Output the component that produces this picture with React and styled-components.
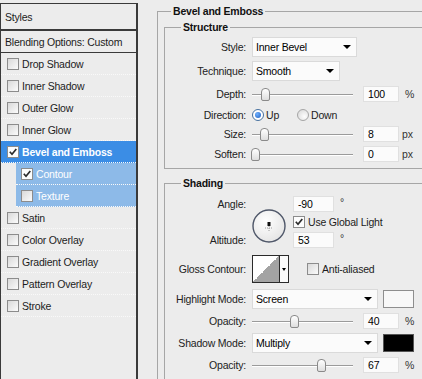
import React from "react";
import styled, { createGlobalStyle } from "styled-components";

const GlobalStyle = createGlobalStyle`
  html, body {
    margin: 0;
    padding: 0;
  }
  body {
    background: #ececec;
    font-family: "Liberation Sans", Arial, sans-serif;
    font-size: 10.5px;
    letter-spacing: -0.2px;
    color: #1c1c1c;
    overflow: hidden;
  }
`;

const Dialog = styled.div`
  display: flex;
  width: 422px;
  height: 379px;
  overflow: hidden;
  background: #ececec;
`;

/* ---------- left list ---------- */

const Sidebar = styled.div`
  flex: 0 0 138px;
  box-sizing: border-box;
  margin-top: 3px;
  border: 1px solid #3a3a3a;
  border-right-width: 2px;
  border-bottom: none;
  background: #ececec;
`;

const Heading = styled.div`
  display: flex;
  align-items: center;
  box-sizing: border-box;
  height: ${(p) => p.$h}px;
  padding: ${(p) => p.$top || 0}px 0 0 4px;
  border-bottom: ${(p) => p.$line}px solid #3a3a3a;
`;

const Item = styled.div`
  display: flex;
  align-items: center;
  gap: 3px;
  height: 22px;
  box-sizing: border-box;
  margin-left: ${(p) => (p.$sub ? 15 : 0)}px;
  padding-left: ${(p) => (p.$sub ? 5 : 6)}px;
  border-bottom: 1px dotted #f9f9f9;
  background: ${(p) =>
    p.$state === "on" ? "#3b8de5" : p.$state === "sub" ? "#8dbae8" : "transparent"};
  color: ${(p) => (p.$state ? "#fff" : "#1c1c1c")};
  font-weight: ${(p) => (p.$state === "on" ? "bold" : "normal")};
`;

const Box = styled.span`
  flex: none;
  display: inline-flex;
  width: 12px;
  height: 12px;
  box-sizing: border-box;
  border: 1px solid #8c8c8c;
  background: ${(p) =>
    p.$checked ? "#fdfdfd" : "linear-gradient(135deg, #d9d9d9, #fbfbfb)"};
`;

const Check = ({ checked }) => (
  <Box $checked={checked}>
    {checked && (
      <svg width="10" height="10" viewBox="0 0 10 10">
        <path d="M1.8 4.8 L4 7.2 L8.3 2" fill="none" stroke="#2b2b2b" strokeWidth="1.7" />
      </svg>
    )}
  </Box>
);

/* ---------- right panel ---------- */

const Main = styled.div`
  flex: 1;
  padding: 4px 0 0 19px;
`;

const Group = styled.fieldset`
  margin: 0;
  padding: 0;
  min-width: 0;
  width: ${(p) => p.$w}px;
  border: 1px solid #a6a6a6;
`;

const Legend = styled.legend`
  margin-left: ${(p) => p.$offset}px;
  padding: 0 2px;
  font-weight: bold;
  line-height: 14px;
  color: #111;
`;

const GroupBody = styled.div`
  padding: ${(p) => p.$pad};
`;

const Field = styled.div`
  display: flex;
  align-items: center;
  height: ${(p) => p.$h || 22}px;
  margin-top: ${(p) => p.$mt || 0}px;
`;

const Label = styled.div`
  flex: none;
  width: 81px;
  margin-right: 6px;
  text-align: right;
  color: #222;
`;

const Select = styled.div`
  display: flex;
  align-items: center;
  justify-content: space-between;
  width: ${(p) => p.$w}px;
  height: 20px;
  box-sizing: border-box;
  padding: 0 5px 0 3px;
  background: #fbfbfb;
  border: 1px solid #dadada;
  color: #000;
`;

const Arrow = styled.span`
  width: 0;
  height: 0;
  border-left: 4px solid transparent;
  border-right: 4px solid transparent;
  border-top: 4px solid #000;
`;

const Track = styled.div`
  position: relative;
  flex: none;
  width: 101px;
  height: 14px;
  margin-right: 10px;
  &::before {
    content: "";
    position: absolute;
    left: 0;
    right: 0;
    top: 7px;
    height: 1px;
    background: #9b9b9b;
    box-shadow: 0 1px 0 #fff;
  }
`;

const Thumb = styled.div`
  position: absolute;
  top: 1px;
  width: 9px;
  height: 13px;
  box-sizing: border-box;
  border: 1px solid #8a8a8a;
  border-radius: 4px 4px 2px 2px;
  background: linear-gradient(#ffffff, #dedede);
`;

const Input = styled.div`
  flex: none;
  width: ${(p) => p.$w || 36}px;
  height: 16px;
  box-sizing: border-box;
  padding-left: 4px;
  line-height: 14px;
  background: #fbfbfb;
  border: 1px solid #e0e0e0;
  color: #000;
`;

const Unit = styled.span`
  margin-left: ${(p) => p.$ml || 6}px;
  color: #333;
  align-self: ${(p) => (p.$raised ? "flex-start" : "auto")};
  margin-top: ${(p) => (p.$raised ? 1 : 0)}px;
`;

const Radio = styled.span`
  flex: none;
  position: relative;
  width: 12px;
  height: 12px;
  box-sizing: border-box;
  border-radius: 50%;
  margin-right: 2px;
  border: 1px solid ${(p) => (p.$on ? "#46709e" : "#a5a5a5")};
  background: ${(p) =>
    p.$on ? "#fff" : "radial-gradient(circle at 65% 65%, #fdfdfd, #d6d6d6)"};
  &::after {
    content: "";
    display: ${(p) => (p.$on ? "block" : "none")};
    position: absolute;
    left: 2px;
    top: 2px;
    width: 6px;
    height: 6px;
    border-radius: 50%;
    background: radial-gradient(circle at 35% 35%, #6fb0ff, #1f5fbf);
  }
`;

const Spacer = styled.span`
  display: inline-block;
  width: ${(p) => p.$w}px;
`;

const Slider = ({ label, pos, value, unit, h }) => (
  <Field $h={h}>
    <Label>{label}</Label>
    <Track>
      <Thumb style={{ left: pos }} />
    </Track>
    <Input>{value}</Input>
    <Unit $ml={unit === "%" ? 6 : 3}>{unit}</Unit>
  </Field>
);

const AngleBlock = styled.div`
  display: grid;
  grid-template-columns: 81px 34px auto;
  grid-template-rows: 18px 18px 18px;
  column-gap: 6px;
`;

const GridLabel = styled(Label)`
  grid-column: 1;
  grid-row: ${(p) => p.$row};
  align-self: center;
  margin-right: 0;
`;

const DialSlot = styled.div`
  grid-column: 2;
  grid-row: 1 / 4;
  margin-top: 14px;
  width: 34px;
  height: 34px;
`;

const Cell = styled.div`
  grid-column: 3;
  grid-row: ${(p) => p.$row};
  display: flex;
  align-items: center;
  gap: ${(p) => p.$gap || 0}px;
  margin-left: 1px;
`;

const Dial = () => (
  <DialSlot>
    <svg width="34" height="34" viewBox="0 0 34 34">
      <defs>
        <radialGradient id="dialFill" cx="40%" cy="35%" r="70%">
          <stop offset="0" stopColor="#ffffff" />
          <stop offset="1" stopColor="#e4e4e4" />
        </radialGradient>
      </defs>
      <circle cx="17" cy="17" r="16" fill="url(#dialFill)" stroke="#4f5769" strokeWidth="1.4" />
      <line x1="13" y1="19" x2="21" y2="19" stroke="#9a9a9a" strokeWidth="1" strokeDasharray="1 1" />
      <line x1="17" y1="15" x2="17" y2="23" stroke="#9a9a9a" strokeWidth="1" strokeDasharray="1 1" />
      <rect x="15.5" y="13" width="3" height="4" fill="#111" />
    </svg>
  </DialSlot>
);

const ContourThumb = styled.div`
  flex: none;
  width: 28px;
  height: 28px;
  box-sizing: border-box;
  border: 1px solid #2a2a2a;
  background: linear-gradient(to bottom right, #ffffff 50%, #a3a3a3 50%);
`;

const ContourButton = styled.div`
  flex: none;
  display: flex;
  align-items: center;
  justify-content: center;
  width: 9px;
  height: 28px;
  box-sizing: border-box;
  border: 1px solid #2a2a2a;
  border-left: none;
  background: #fafafa;
`;

const SmallArrow = styled.span`
  width: 0;
  height: 0;
  border-left: 2.5px solid transparent;
  border-right: 2.5px solid transparent;
  border-top: 3px solid #000;
`;

const Swatch = styled.div`
  flex: none;
  width: 31px;
  height: 18px;
  margin-left: 5px;
  box-sizing: border-box;
  border: 1px solid ${(p) => (p.$color === "#000" ? "#555" : "#8e8e8e")};
  background: ${(p) => p.$color};
`;

const effects = [
  { name: "Drop Shadow" },
  { name: "Inner Shadow" },
  { name: "Outer Glow" },
  { name: "Inner Glow" },
  { name: "Bevel and Emboss", checked: true, state: "on" },
  { name: "Contour", checked: true, state: "sub", sub: true },
  { name: "Texture", state: "sub", sub: true },
  { name: "Satin" },
  { name: "Color Overlay" },
  { name: "Gradient Overlay" },
  { name: "Pattern Overlay" },
  { name: "Stroke" },
];

export default function App() {
  return (
    <>
      <GlobalStyle />
      <Dialog>
        <Sidebar>
          <Heading $h={27} $top={1} $line={2}>Styles</Heading>
          <Heading $h={22} $line={1}>Blending Options: Custom</Heading>
          {effects.map((e) => (
            <Item key={e.name} $state={e.state} $sub={e.sub}>
              <Check checked={e.checked} />
              {e.name}
            </Item>
          ))}
        </Sidebar>

        <Main>
          <Group $w={300}>
            <Legend $offset={13}>Bevel and Emboss</Legend>
            <GroupBody $pad="2px 0 0 6px">
              <Group $w={280}>
                <Legend $offset={16}>Structure</Legend>
                <GroupBody $pad="1px 0 4px 0">
                  <Field $h={24}>
                    <Label>Style:</Label>
                    <Select $w={105}>
                      Inner Bevel <Arrow />
                    </Select>
                  </Field>
                  <Field $h={24}>
                    <Label>Technique:</Label>
                    <Select $w={88}>
                      Smooth <Arrow />
                    </Select>
                  </Field>
                  <Slider label="Depth:" pos={9} value="100" unit="%" h={22} />
                  <Field $h={19}>
                    <Label>Direction:</Label>
                    <Radio $on />
                    Up
                    <Spacer $w={18} />
                    <Radio />
                    Down
                  </Field>
                  <Slider label="Size:" pos={8} value="8" unit="px" h={20} />
                  <Slider label="Soften:" pos={-1} value="0" unit="px" h={20} />
                </GroupBody>
              </Group>

              <Group $w={280} style={{ marginTop: 7 }}>
                <Legend $offset={16}>Shading</Legend>
                <GroupBody $pad="5px 0 20px 0">
                  <AngleBlock>
                    <GridLabel $row={1}>Angle:</GridLabel>
                    <GridLabel $row={3}>Altitude:</GridLabel>
                    <Dial />
                    <Cell $row={1}>
                      <Input $w={41}>-90</Input>
                      <Unit $raised>°</Unit>
                    </Cell>
                    <Cell $row={2} $gap={3}>
                      <Check checked />
                      Use Global Light
                    </Cell>
                    <Cell $row={3}>
                      <Input $w={41}>53</Input>
                      <Unit $raised>°</Unit>
                    </Cell>
                  </AngleBlock>

                  <Field $h={36} $mt={2}>
                    <Label>Gloss Contour:</Label>
                    <ContourThumb />
                    <ContourButton>
                      <SmallArrow />
                    </ContourButton>
                    <Spacer $w={18} />
                    <Check />
                    <Spacer $w={3} />
                    Anti-aliased
                  </Field>

                  <Field $h={22} $mt={1}>
                    <Label>Highlight Mode:</Label>
                    <Select $w={126}>
                      Screen <Arrow />
                    </Select>
                    <Swatch $color="#f8f8f8" />
                  </Field>
                  <Slider label="Opacity:" pos={38} value="40" unit="%" h={22} />
                  <Field $h={22}>
                    <Label>Shadow Mode:</Label>
                    <Select $w={126}>
                      Multiply <Arrow />
                    </Select>
                    <Swatch $color="#000" />
                  </Field>
                  <Slider label="Opacity:" pos={65} value="67" unit="%" h={22} />
                </GroupBody>
              </Group>
            </GroupBody>
          </Group>
        </Main>
      </Dialog>
    </>
  );
}
